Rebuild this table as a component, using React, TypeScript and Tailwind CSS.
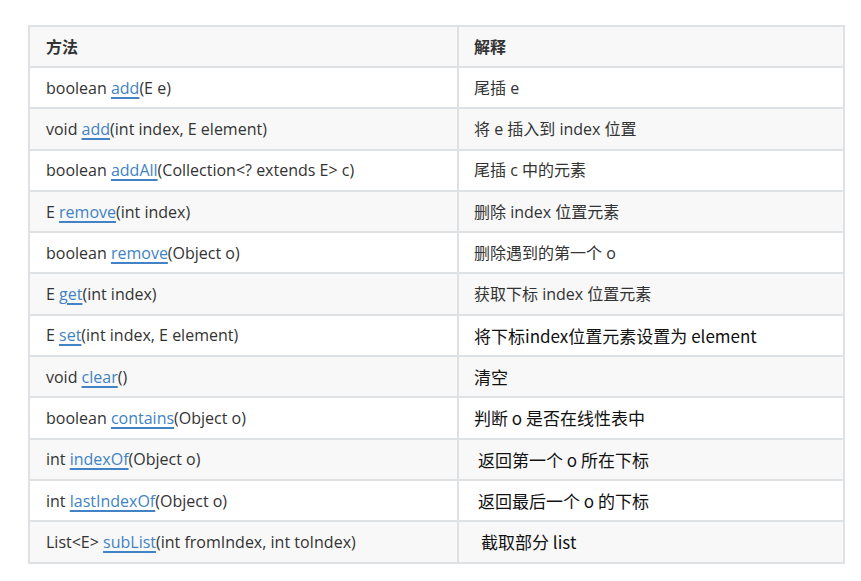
const rows: { pre: string; link: string; post: string; desc: string; dark?: boolean; indent?: string }[] = [
  { pre: "boolean ", link: "add", post: "(E e)", desc: "尾插 e" },
  { pre: "void ", link: "add", post: "(int index, E element)", desc: "将 e 插入到 index 位置" },
  { pre: "boolean ", link: "addAll", post: "(Collection<? extends E> c)", desc: "尾插 c 中的元素" },
  { pre: "E ", link: "remove", post: "(int index)", desc: "删除 index 位置元素" },
  { pre: "boolean ", link: "remove", post: "(Object o)", desc: "删除遇到的第一个 o" },
  { pre: "E ", link: "get", post: "(int index)", desc: "获取下标 index 位置元素" },
  { pre: "E ", link: "set", post: "(int index, E element)", desc: "将下标index位置元素设置为 element", dark: true },
  { pre: "void ", link: "clear", post: "()", desc: "清空", dark: true },
  { pre: "boolean ", link: "contains", post: "(Object o)", desc: "判断 o 是否在线性表中", dark: true },
  { pre: "int ", link: "indexOf", post: "(Object o)", desc: "返回第一个 o 所在下标", dark: true, indent: "pl-[19px]" },
  { pre: "int ", link: "lastIndexOf", post: "(Object o)", desc: "返回最后一个 o 的下标", dark: true, indent: "pl-[19px]" },
  { pre: "List<E> ", link: "subList", post: "(int fromIndex, int toIndex)", desc: "截取部分 list", dark: true, indent: "pl-[22px]" },
];

const sans = "font-['Open_Sans','Noto_Sans_CJK_SC',sans-serif]";

export default function App() {
  return (
    <div className="min-h-[581px] w-[861px] bg-white pt-[25px] pl-[28px]">
      <table className={`w-[817px] border-collapse text-[16px] text-[#333] ${sans}`}>
        <thead>
          <tr className="h-[41px] bg-[#f8f8f8]">
            <th className="w-[429px] border-2 border-[#dfe2e5] pl-[16px] text-left font-bold">方法</th>
            <th className="border-2 border-[#dfe2e5] pl-[15px] text-left font-bold">解释</th>
          </tr>
        </thead>
        <tbody>
          {rows.map((r, i) => (
            <tr key={i} className={`h-[41.3px] ${i % 2 === 1 ? "bg-[#f8f8f8]" : "bg-white"}`}>
              <td className="border-2 border-[#dfe2e5] pl-[16px] whitespace-pre">
                {r.pre}
                <a className="text-[#4183c4] underline decoration-[#4183c4] decoration-2 underline-offset-[3px]">{r.link}</a>
                {r.post}
              </td>
              <td
                className={`border-2 border-[#dfe2e5] ${r.indent ?? "pl-[15px]"} ${
                  r.dark ? "font-['Noto_Sans_CJK_SC',sans-serif] text-[17px] text-[#111]" : ""
                }`}
              >
                {r.desc}
              </td>
            </tr>
          ))}
        </tbody>
      </table>
    </div>
  );
}
